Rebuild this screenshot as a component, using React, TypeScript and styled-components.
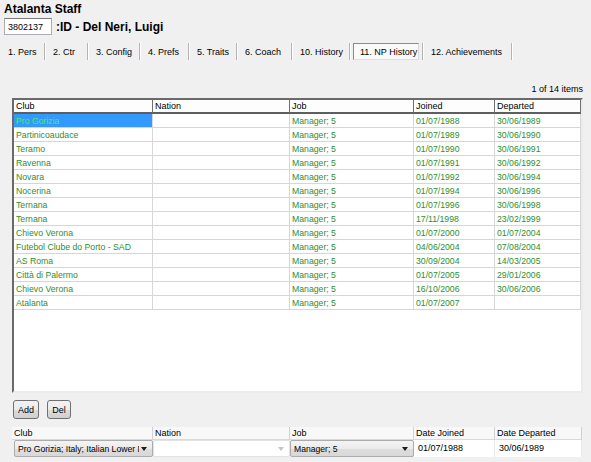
import React from 'react';
import styled, { createGlobalStyle } from 'styled-components';

const GlobalStyle = createGlobalStyle`
  html, body {
    margin: 0;
    padding: 0;
    background: #f0f0f0;
  }
  body {
    font-family: "Liberation Sans", Arial, sans-serif;
    font-size: 9px;
    color: #000;
  }
`;

const tabs = [
  { label: '1. Pers', w: 45 },
  { label: '2. Ctr', w: 43 },
  { label: '3. Config', w: 52 },
  { label: '4. Prefs', w: 49 },
  { label: '5. Traits', w: 48 },
  { label: '6. Coach', w: 55 },
  { label: '10. History', w: 58 },
  { label: '11. NP History', w: 73, active: true },
  { label: '12. Achievements', w: 89 },
];

const rows = [
  ['Pro Gorizia', '', 'Manager; 5', '01/07/1988', '30/06/1989'],
  ['Partinicoaudace', '', 'Manager; 5', '01/07/1989', '30/06/1990'],
  ['Teramo', '', 'Manager; 5', '01/07/1990', '30/06/1991'],
  ['Ravenna', '', 'Manager; 5', '01/07/1991', '30/06/1992'],
  ['Novara', '', 'Manager; 5', '01/07/1992', '30/06/1994'],
  ['Nocerina', '', 'Manager; 5', '01/07/1994', '30/06/1996'],
  ['Ternana', '', 'Manager; 5', '01/07/1996', '30/06/1998'],
  ['Ternana', '', 'Manager; 5', '17/11/1998', '23/02/1999'],
  ['Chievo Verona', '', 'Manager; 5', '01/07/2000', '01/07/2004'],
  ['Futebol Clube do Porto - SAD', '', 'Manager; 5', '04/06/2004', '07/08/2004'],
  ['AS Roma', '', 'Manager; 5', '30/09/2004', '14/03/2005'],
  ['Città di Palermo', '', 'Manager; 5', '01/07/2005', '29/01/2006'],
  ['Chievo Verona', '', 'Manager; 5', '16/10/2006', '30/06/2006'],
  ['Atalanta', '', 'Manager; 5', '01/07/2007', ''],
];

const headers = ['Club', 'Nation', 'Job', 'Joined', 'Departed'];

const App = () => {
  return (
    <Page>
      <GlobalStyle />
      <Title>Atalanta Staff</Title>
      <IdRow>
        <IdBox>3802137</IdBox>
        <StaffName>:ID - Del Neri, Luigi</StaffName>
      </IdRow>

      <TabBar>
        {tabs.map((t) => (
          <Tab key={t.label} $w={t.w}>
            {t.active ? <ActiveTab>{t.label}</ActiveTab> : <TabText>{t.label}</TabText>}
          </Tab>
        ))}
      </TabBar>

      <Count>1 of 14 items</Count>

      <Grid>
        <GridRow>
          {headers.map((h) => (
            <HeadCell key={h}>{h}</HeadCell>
          ))}
        </GridRow>
        {rows.map((r, i) => (
          <GridRow key={i}>
            {r.map((c, j) => (
              <Cell key={j} $selected={i === 0 && j === 0}>
                {c}
              </Cell>
            ))}
          </GridRow>
        ))}
      </Grid>

      <Buttons>
        <Button>Add</Button>
        <Button>Del</Button>
      </Buttons>

      <Editor>
        <FieldLabel>Club</FieldLabel>
        <FieldLabel>Nation</FieldLabel>
        <FieldLabel>Job</FieldLabel>
        <FieldLabel>Date Joined</FieldLabel>
        <FieldLabel>Date Departed</FieldLabel>

        <Combo $inset={2}>
          <ComboText>Pro Gorizia; Italy; Italian Lower D</ComboText>
          <Arrow />
        </Combo>
        <Combo $flat>
          <ComboText />
          <Arrow $muted />
        </Combo>
        <Combo>
          <ComboText>Manager; 5</ComboText>
          <Arrow />
        </Combo>
        <DateField>01/07/1988</DateField>
        <DateField>30/06/1989</DateField>
      </Editor>
    </Page>
  );
};

export default App;

const Page = styled.div`
  width: 591px;
  height: 462px;
  overflow: hidden;
  display: flex;
  flex-direction: column;
`;

const Title = styled.div`
  font-size: 12px;
  font-weight: bold;
  line-height: 14px;
  padding: 2px 0 0 4px;
`;

const IdRow = styled.div`
  display: flex;
  align-items: center;
  gap: 4px;
  margin: 2px 0 0 4px;
  height: 17px;
`;

const IdBox = styled.div`
  width: 48px;
  height: 17px;
  box-sizing: border-box;
  background: #fff;
  border: 1px solid #abadb3;
  border-top-color: #7a7a7a;
  padding: 3px 0 0 3px;
  line-height: 10px;
`;

const StaffName = styled.div`
  font-size: 12px;
  font-weight: bold;
  line-height: 14px;
`;

const TabBar = styled.div`
  display: flex;
  margin-top: 8px;
  height: 17px;
`;

const Tab = styled.div<{ $w: number }>`
  width: ${(p) => p.$w}px;
  box-sizing: border-box;
  display: flex;
  align-items: center;
  border-right: 1px solid #b4b4b4;
  box-shadow: 1px 0 0 #fff;
  white-space: nowrap;
`;

const TabText = styled.span`
  padding-left: 8px;
`;

const ActiveTab = styled.span`
  margin-left: 3px;
  width: 66px;
  height: 17px;
  box-sizing: border-box;
  padding: 3px 0 0 6px;
  background: #fafafa;
  border: 1px solid #fff;
  border-top-color: #8a8a8a;
  border-left-color: #8a8a8a;
  border-right-color: #d8d8d8;
  border-bottom-color: #e0e0e0;
`;

const Count = styled.div`
  text-align: right;
  padding-right: 8px;
  margin-top: 23px;
  line-height: 12px;
`;

const Grid = styled.div`
  margin: 3px 0 0 12px;
  width: 571px;
  height: 295px;
  box-sizing: border-box;
  background: #fff;
  border-style: solid;
  border-width: 2px 2px 2px 2px;
  border-top-color: #6a6a6a;
  border-left-color: #6a6a6a;
  border-right-color: #ececec;
  border-bottom-color: #ececec;
`;

const GridRow = styled.div`
  display: grid;
  grid-template-columns: 139px 137px 124px 81px 86px;
`;

const HeadCell = styled.div`
  height: 14px;
  box-sizing: border-box;
  padding: 1px 0 0 2px;
  line-height: 11px;
  background: #fdfdfd;
  border-right: 1px solid #707070;
  border-bottom: 2px solid #5e5e5e;
`;

const Cell = styled.div<{ $selected?: boolean }>`
  height: 14px;
  box-sizing: border-box;
  padding: 1px 0 0 2px;
  line-height: 12px;
  font-size: 8.7px;
  white-space: nowrap;
  overflow: hidden;
  color: ${(p) => (p.$selected ? '#3ef064' : '#2e8f2e')};
  background: ${(p) => (p.$selected ? '#3399ff' : '#fff')};
  border-right: 1px solid #d6d6d6;
  border-bottom: 1px solid #d6d6d6;
`;

const Buttons = styled.div`
  display: flex;
  gap: 8px;
  margin: 7px 0 0 13px;
`;

const Button = styled.button`
  height: 19px;
  min-width: 24px;
  padding: 0 4px;
  font-family: inherit;
  font-size: 9px;
  color: #000;
  border: 1px solid #707070;
  border-radius: 3px;
  background: linear-gradient(#f2f2f2, #ebebeb 50%, #dddddd 51%, #cfcfcf);
`;

const Editor = styled.div`
  display: grid;
  grid-template-columns: 141px 137px 124px 81px 87px;
  grid-template-rows: 13px 17px;
  margin: 8px 0 0 12px;
`;

const FieldLabel = styled.div`
  box-sizing: border-box;
  padding: 1px 0 0 2px;
  line-height: 11px;
  background: #f8f8f8;
  border-right: 1px solid #d2d2d2;
  border-bottom: 1px solid #d9d9d9;
`;

const Combo = styled.div<{ $inset?: number; $flat?: boolean }>`
  display: flex;
  align-items: center;
  margin-left: ${(p) => p.$inset || 0}px;
  box-sizing: border-box;
  border: 1px solid ${(p) => (p.$flat ? '#e2e2e2' : '#acacac')};
  border-radius: 2px;
  background: ${(p) =>
    p.$flat ? '#fff' : 'linear-gradient(#f4f4f4, #ebebeb 50%, #dedede 51%, #d8d8d8)'};
  padding: 0 5px 0 3px;
`;

const ComboText = styled.span`
  flex: 1;
  font-size: 8.6px;
  white-space: nowrap;
  overflow: hidden;
`;

const Arrow = styled.span<{ $muted?: boolean }>`
  width: 0;
  height: 0;
  margin-left: 2px;
  border-left: 3px solid transparent;
  border-right: 3px solid transparent;
  border-top: 4px solid ${(p) => (p.$muted ? '#c4c4c4' : '#1a1a1a')};
`;

const DateField = styled.div`
  box-sizing: border-box;
  background: #fff;
  padding: 2px 0 0 4px;
  line-height: 12px;
  border-right: 1px solid #eaeaea;
`;
